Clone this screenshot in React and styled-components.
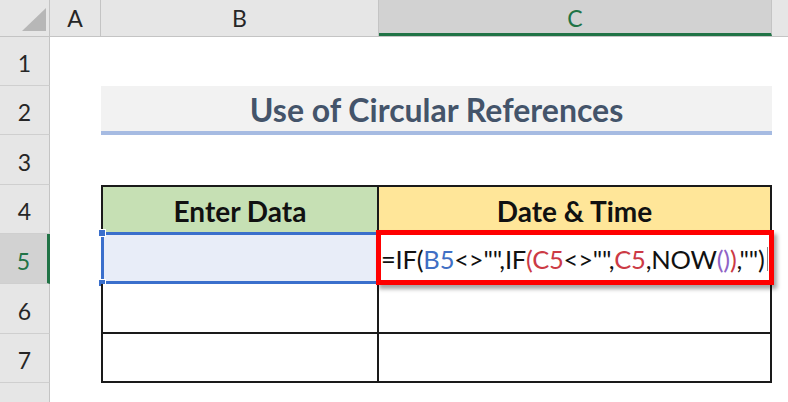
import React from "react";
import styled, { createGlobalStyle } from "styled-components";

const GlobalStyle = createGlobalStyle`
  body {
    margin: 0;
    background: #ffffff;
    overflow: hidden;
  }
  * {
    box-sizing: border-box;
  }
`;

const COLS = { a: 51, b: 278, c: 393 };

const Sheet = styled.div`
  width: 788px;
  height: 402px;
  overflow: hidden;
  background: #ffffff;
  font-family: Lato, "Liberation Sans", sans-serif;
`;

const HeaderRow = styled.div`
  display: flex;
  height: 37px;
  background: #e6e6e6;
  border-bottom: 1px solid #c4c4c4;
`;

const Corner = styled.div`
  position: relative;
  width: 50px;
  flex: none;
  border-right: 1px solid #c4c4c4;

  > svg {
    position: absolute;
    left: 22px;
    top: 8px;
  }
`;

const ColHead = styled.div`
  width: ${(p) => p.$w}px;
  flex: none;
  display: flex;
  align-items: center;
  justify-content: center;
  font-size: 23px;
  color: ${(p) => (p.$active ? "#217346" : "#262626")};
  background: ${(p) => (p.$active ? "#d2d2d2" : "transparent")};
  border-right: 1px solid #c4c4c4;
  border-bottom: ${(p) => (p.$active ? "3px solid #217346" : "none")};
  padding-top: ${(p) => (p.$active ? "3px" : "0")};
`;

const HeadFiller = styled.div`
  flex: 1;
  background: #e6e6e6;
`;

const Row = styled.div`
  display: flex;
  height: ${(p) => p.$h}px;
`;

const RowHead = styled.div`
  width: 50px;
  flex: none;
  display: flex;
  align-items: center;
  justify-content: center;
  padding-top: 4px;
  font-size: 23px;
  color: ${(p) => (p.$active ? "#217346" : "#262626")};
  background: ${(p) => (p.$active ? "#d2d2d2" : "#e6e6e6")};
  border-right: ${(p) => (p.$active ? "3px solid #217346" : "1px solid #c4c4c4")};
  border-bottom: 1px solid #cfcfcf;
`;

const Cell = styled.div`
  width: ${(p) => p.$w}px;
  flex: none;
`;

const TitleCell = styled.div`
  width: ${COLS.b + COLS.c}px;
  flex: none;
  display: flex;
  align-items: center;
  justify-content: center;
  padding-top: 2px;
  background: #f2f2f2;
  border-bottom: 4px solid #a6bbe2;
  color: #44546a;
  font-weight: 700;
  font-size: 32px;
`;

const TableCell = styled.div`
  position: relative;
  width: ${(p) => p.$w}px;
  flex: none;
  display: flex;
  align-items: center;
  justify-content: center;
  padding-top: 3px;
  background: ${(p) => p.$bg || "#ffffff"};
  border-right: 2px solid #1a1a1a;
  border-left: ${(p) => (p.$first ? "2px solid #1a1a1a" : "none")};
  border-top: ${(p) => (p.$top ? "2px solid #1a1a1a" : "none")};
  border-bottom: 2px solid #1a1a1a;
  font-size: 28px;
  font-weight: 700;
  color: #111111;
`;

const SelectionFrame = styled.div`
  position: absolute;
  left: -2px;
  top: -2px;
  right: -2px;
  bottom: -2px;
  border: 3px solid #3a6fcc;
`;

const Handle = styled.span`
  position: absolute;
  left: -5px;
  ${(p) => (p.$bottom ? "bottom: -5px;" : "top: -5px;")}
  width: 8px;
  height: 8px;
  background: #3a6fcc;
  border: 1px solid #ffffff;
`;

const FormulaBox = styled.div`
  position: absolute;
  left: -3px;
  top: -4px;
  width: 398px;
  height: 55px;
  display: flex;
  align-items: center;
  padding-top: 2px;
  background: #ffffff;
  border: 5px solid #ff0000;
  box-shadow: 3px 4px 4px rgba(0, 0, 0, 0.35);
  font-size: 25.5px;
  font-weight: 400;
  letter-spacing: -0.2px;
  color: #111111;
  white-space: nowrap;
  z-index: 2;
`;

const Tok = styled.span`
  color: ${(p) => p.$c};
`;

const Caret = styled.span`
  display: inline-block;
  width: 1px;
  height: 24px;
  margin-left: 2px;
  background: #8a8a8a;
`;

const blue = "#3f6fc4";
const red = "#cc3a45";
const purple = "#8f63c6";

const Formula = () => (
  <FormulaBox>
    <span>=IF(</span>
    <Tok $c={blue}>B5</Tok>
    <span>{'<>"",IF'}</span>
    <Tok $c={red}>(C5</Tok>
    <span>{'<>"",'}</span>
    <Tok $c={red}>C5</Tok>
    <span>,NOW</span>
    <Tok $c={purple}>()</Tok>
    <Tok $c={red}>)</Tok>
    <span>{',"")'}</span>
    <Caret />
  </FormulaBox>
);

const PlainRow = ({ n, h, children }) => (
  <Row $h={h}>
    <RowHead>{n}</RowHead>
    <Cell $w={COLS.a} />
    {children}
  </Row>
);

export default function App() {
  return (
    <Sheet>
      <GlobalStyle />
      <HeaderRow>
        <Corner>
          <svg width="24" height="23" viewBox="0 0 24 23">
            <polygon points="0,23 24,23 24,0" fill="#b7b7b7" />
          </svg>
        </Corner>
        <ColHead $w={COLS.a}>A</ColHead>
        <ColHead $w={COLS.b}>B</ColHead>
        <ColHead $w={COLS.c} $active>
          C
        </ColHead>
        <HeadFiller />
      </HeaderRow>

      <PlainRow n={1} h={49} />
      <PlainRow n={2} h={49}>
        <TitleCell>Use of Circular References</TitleCell>
      </PlainRow>
      <PlainRow n={3} h={50} />
      <PlainRow n={4} h={49}>
        <TableCell $w={COLS.b} $bg="#c6e0b4" $first $top>
          Enter Data
        </TableCell>
        <TableCell $w={COLS.c} $bg="#ffe699" $top>
          Date &amp; Time
        </TableCell>
      </PlainRow>
      <Row $h={50}>
        <RowHead $active>5</RowHead>
        <Cell $w={COLS.a} />
        <TableCell $w={COLS.b} $bg="#e8edf8" $first>
          <SelectionFrame />
          <Handle />
          <Handle $bottom />
        </TableCell>
        <TableCell $w={COLS.c}>
          <Formula />
        </TableCell>
      </Row>
      <PlainRow n={6} h={50}>
        <TableCell $w={COLS.b} $first />
        <TableCell $w={COLS.c} />
      </PlainRow>
      <PlainRow n={7} h={49}>
        <TableCell $w={COLS.b} $first />
        <TableCell $w={COLS.c} />
      </PlainRow>
      <PlainRow n="" h={30} />
    </Sheet>
  );
}
